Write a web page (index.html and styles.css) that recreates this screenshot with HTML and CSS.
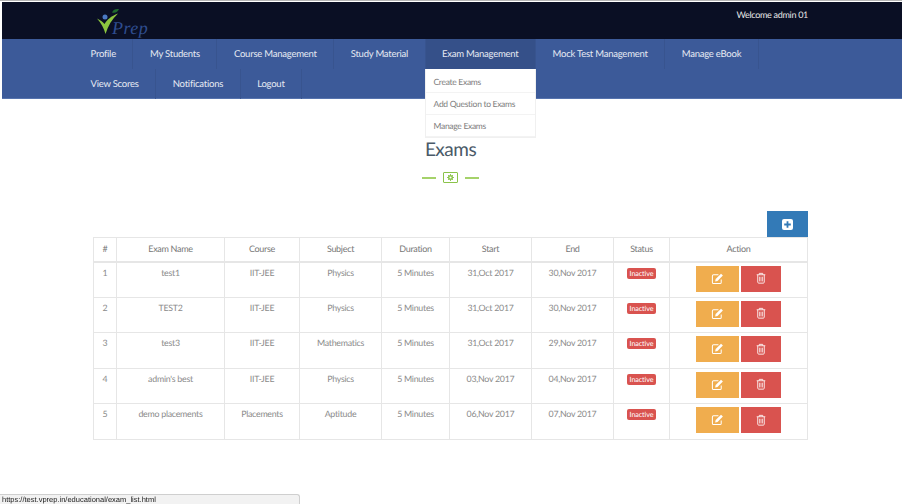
FILE: index.html
```html
<!DOCTYPE html>
<html lang="en">
<head>
    <meta charset="UTF-8">
    <meta name="viewport" content="width=device-width, initial-scale=1.0">
    <title>Exams</title>
    <link rel="stylesheet" href="styles.css">
</head>
<body>
    <svg class="sprites" width="0" height="0">
        <symbol id="icon-edit" viewBox="0 0 14 14">
            <path d="M11 8v3.200a1.300 1.300 0 0 1-1.300 1.300H2.800a1.300 1.300 0 0 1-1.300-1.300V4.300A1.300 1.300 0 0 1 2.800 3H8" fill="none" stroke="currentColor" stroke-width="1.100"/>
            <path d="M5 7.600 10.800 1.800l2 2L7 9.600l-2.500.5z" fill="currentColor"/>
        </symbol>
        <symbol id="icon-trash" viewBox="0 0 14 14">
            <path d="M2 3.200h10M5 3V1.600h4V3" fill="none" stroke="currentColor" stroke-width="1"/>
            <path d="M3.200 3.500v8.300c0 .7.5 1.200 1.100 1.200h5.400c.6 0 1.100-.5 1.100-1.200V3.500" fill="none" stroke="currentColor" stroke-width="1"/>
            <path d="M5.300 5.500v5.500M7 5.500v5.500M8.700 5.500v5.500" fill="none" stroke="currentColor" stroke-width=".8"/>
        </symbol>
    </svg>

    <header class="topbar">
        <a class="logo" href="#">
            <svg class="logo-mark" width="24" height="28" viewBox="0 0 24 28">
                <path d="M0 10.500 C3 12 6 14 7.500 16 C10 12 14 8 21 5.500 C15 11 11 18 8.500 26 C7 20 4 15 0 10.500z" fill="#8cc63f"/>
                <circle cx="8" cy="9" r="2.500" fill="#4a78c2"/>
                <path d="M15 4.500 C16 1.500 19 0.500 22 1 C21 4 18 5.500 15 4.500z" fill="#1f6b2e"/>
            </svg>
            <span class="logo-text">Prep</span>
        </a>
        <div class="welcome">Welcome admin 01</div>
    </header>

    <nav class="mainnav">
        <ul class="menu">
            <li><a href="#">Profile</a></li>
            <li><a href="#">My Students</a></li>
            <li><a href="#">Course Management</a></li>
            <li><a href="#">Study Material</a></li>
            <li class="open">
                <a href="#">Exam Management</a>
                <ul class="dropdown">
                    <li><a href="#">Create Exams</a></li>
                    <li><a href="#">Add Question to Exams</a></li>
                    <li><a href="#">Manage Exams</a></li>
                </ul>
            </li>
            <li><a href="#">Mock Test Management</a></li>
            <li><a href="#">Manage eBook</a></li>
            <li><a href="#">View Scores</a></li>
            <li><a href="#">Notifications</a></li>
            <li><a href="#">Logout</a></li>
        </ul>
    </nav>

    <main class="content">
        <h1>Exams</h1>
        <div class="divider">
            <span class="line"></span>
            <span class="divider-box">
                <svg width="7" height="7" viewBox="0 0 10 10"><circle cx="5" cy="5" r="2.600" fill="none" stroke="#8bc34a" stroke-width="2"/><path d="M5 0v2M5 8v2M0 5h2M8 5h2M1.500 1.500l1.400 1.400M7.100 7.100l1.400 1.400M1.500 8.500l1.400-1.400M7.100 2.900l1.400-1.400" stroke="#8bc34a" stroke-width="1.300"/></svg>
            </span>
            <span class="line"></span>
        </div>

        <div class="toolbar">
            <button class="btn-add" type="button">
                <svg width="11" height="11" viewBox="0 0 11 11"><rect width="11" height="11" rx="2" fill="#fff"/><path d="M5.500 2.200v6.600M2.200 5.500h6.600" stroke="#337ab7" stroke-width="1.800"/></svg>
            </button>
        </div>

        <table class="exams">
            <thead>
                <tr>
                    <th>#</th>
                    <th>Exam Name</th>
                    <th>Course</th>
                    <th>Subject</th>
                    <th>Duration</th>
                    <th>Start</th>
                    <th>End</th>
                    <th>Status</th>
                    <th>Action</th>
                </tr>
            </thead>
            <tbody>
                <tr>
                    <td>1</td><td>test1</td><td>IIT-JEE</td><td>Physics</td><td>5 Minutes</td><td>31,Oct 2017</td><td>30,Nov 2017</td>
                    <td><span class="badge">Inactive</span></td>
                    <td class="actions"><button class="btn edit" type="button"><svg width="13" height="13"><use href="#icon-edit"/></svg></button><button class="btn del" type="button"><svg width="12" height="12"><use href="#icon-trash"/></svg></button></td>
                </tr>
                <tr>
                    <td>2</td><td>TEST2</td><td>IIT-JEE</td><td>Physics</td><td>5 Minutes</td><td>31,Oct 2017</td><td>30,Nov 2017</td>
                    <td><span class="badge">Inactive</span></td>
                    <td class="actions"><button class="btn edit" type="button"><svg width="13" height="13"><use href="#icon-edit"/></svg></button><button class="btn del" type="button"><svg width="12" height="12"><use href="#icon-trash"/></svg></button></td>
                </tr>
                <tr>
                    <td>3</td><td>test3</td><td>IIT-JEE</td><td>Mathematics</td><td>5 Minutes</td><td>31,Oct 2017</td><td>29,Nov 2017</td>
                    <td><span class="badge">Inactive</span></td>
                    <td class="actions"><button class="btn edit" type="button"><svg width="13" height="13"><use href="#icon-edit"/></svg></button><button class="btn del" type="button"><svg width="12" height="12"><use href="#icon-trash"/></svg></button></td>
                </tr>
                <tr>
                    <td>4</td><td>admin's best</td><td>IIT-JEE</td><td>Physics</td><td>5 Minutes</td><td>03,Nov 2017</td><td>04,Nov 2017</td>
                    <td><span class="badge">Inactive</span></td>
                    <td class="actions"><button class="btn edit" type="button"><svg width="13" height="13"><use href="#icon-edit"/></svg></button><button class="btn del" type="button"><svg width="12" height="12"><use href="#icon-trash"/></svg></button></td>
                </tr>
                <tr>
                    <td>5</td><td>demo placements</td><td>Placements</td><td>Aptitude</td><td>5 Minutes</td><td>06,Nov 2017</td><td>07,Nov 2017</td>
                    <td><span class="badge">Inactive</span></td>
                    <td class="actions"><button class="btn edit" type="button"><svg width="13" height="13"><use href="#icon-edit"/></svg></button><button class="btn del" type="button"><svg width="12" height="12"><use href="#icon-trash"/></svg></button></td>
                </tr>
            </tbody>
        </table>
    </main>

    <div class="statusbar">https://test.vprep.in/educational/exam_list.html</div>
</body>
</html>
```

FILE: styles.css
```css
html, body {
    height: 504px;
    overflow: hidden;
}
body {
    font-family: "Lato", "Open Sans", sans-serif;
    font-size: 10px;
    text-rendering: geometricPrecision;
    margin: 0;
    padding: 1px 0 0 2px;
    border-top: 1px solid #b5b5b5;
    box-sizing: border-box;
    background-color: #fff;
    color: #777;
}
a {
    color: inherit;
    text-decoration: none;
}
.sprites {
    display: block;
    height: 0;
}

/* top bar */
.topbar {
    height: 37px;
    background-color: #0a0f24;
    display: flex;
    justify-content: space-between;
    padding: 0 94px 0 95px;
}
.logo {
    display: flex;
    align-items: flex-start;
    padding-top: 6px;
}
.logo-text {
    font-family: "Liberation Serif", serif;
    font-style: italic;
    font-size: 18px;
    line-height: 22px;
    letter-spacing: 0.5px;
    color: #2f4d8f;
    margin: 9px 0 0 -9px;
}
.welcome {
    color: #e8e8e8;
    font-size: 9px;
    letter-spacing: -0.3px;
    line-height: 25px;
}

/* nav */
.mainnav {
    height: 60px;
    background-color: #3c5a99;
    box-sizing: border-box;
    padding-left: 72px;
    border-bottom: 1px solid #5673ad;
}
.menu {
    list-style: none;
    margin: 0;
    padding: 0;
    width: 720px;
    display: flex;
    flex-wrap: wrap;
}
.menu > li {
    position: relative;
    height: 30px;
    border-right: 1px solid #38548f;
}
.menu > li > a {
    display: block;
    height: 30px;
    box-sizing: border-box;
    padding: 1px 16.500px 0;
    font-size: 9.500px;
    letter-spacing: -0.23px;
    line-height: 29px;
    color: #e6eaf3;
}
.menu > li.open > a {
    background-color: #355089;
}
.dropdown {
    list-style: none;
    margin: 0;
    padding: 0;
    position: absolute;
    top: 30px;
    left: -1px;
    width: 109px;
    background-color: #fff;
    border: 1px solid #f0f0f0;
    border-top: none;
    z-index: 5;
}
.dropdown li {
    height: 22px;
    border-bottom: 1px solid #f3f3f3;
    box-sizing: border-box;
}
.dropdown li:first-child {
    height: 24px;
    padding-top: 2px;
}
.dropdown a {
    display: block;
    padding-left: 8px;
    font-size: 8.500px;
    letter-spacing: -0.3px;
    line-height: 22px;
    color: #7d7d7d;
}

/* page title */
.content {
    padding: 0 94px 0 91px;
}
h1 {
    font-size: 19px;
    font-weight: 400;
    letter-spacing: -0.5px;
    line-height: 26px;
    color: #4a5a68;
    text-align: center;
    margin: 38px 0 0;
}
.divider {
    display: flex;
    justify-content: center;
    align-items: center;
    gap: 7px;
    margin-top: 9px;
    height: 11px;
}
.line {
    width: 14px;
    height: 2px;
    background-color: #a5d26a;
}
.divider-box {
    width: 15px;
    height: 11px;
    box-sizing: border-box;
    border: 1px solid #8bc34a;
    border-radius: 1px;
    display: flex;
    justify-content: center;
    align-items: center;
}

/* table */
.toolbar {
    display: flex;
    justify-content: flex-end;
    margin-top: 28px;
}
.btn-add {
    width: 41px;
    height: 26px;
    padding: 0;
    border: none;
    background-color: #337ab7;
    display: flex;
    justify-content: center;
    align-items: center;
}
.exams {
    width: 715px;
    table-layout: fixed;
    border-collapse: collapse;
    color: #8a8a8a;
    font-size: 8.800px;
    letter-spacing: -0.25px;
}
.exams th, .exams td {
    border: 1px solid #e6e6e6;
    text-align: center;
    font-weight: 400;
    padding: 0;
    box-sizing: border-box;
}
.exams th {
    height: 24px;
    font-size: 9px;
    letter-spacing: -0.3px;
    color: #777;
    border-bottom-width: 2px;
    padding-bottom: 2px;
}
.exams td {
    height: 35.600px;
    vertical-align: top;
    padding-top: 4px;
    line-height: 12px;
}
.exams th:nth-child(1) { width: 23px; }
.exams th:nth-child(2) { width: 108px; }
.exams th:nth-child(3) { width: 75px; }
.exams th:nth-child(4) { width: 82px; }
.exams th:nth-child(5) { width: 68px; }
.exams th:nth-child(6) { width: 82px; }
.exams th:nth-child(7) { width: 82px; }
.exams th:nth-child(8) { width: 56px; }
.badge {
    display: inline-block;
    background-color: #d9534f;
    color: #fff;
    font-size: 7.200px;
    letter-spacing: -0.1px;
    line-height: 11px;
    padding: 0 3px;
    border-radius: 2px;
}
.exams td.actions {
    padding-top: 3px;
    padding-right: 1px;
    font-size: 0;
}
.btn {
    height: 26px;
    border: none;
    padding: 0;
    color: #fff;
    vertical-align: top;
}
.btn svg {
    margin-top: 2px;
}
.edit {
    width: 43px;
    background-color: #f0ad4e;
    margin-right: 2px;
}
.del {
    width: 40px;
    background-color: #d9534f;
}

/* browser link preview */
.statusbar {
    position: fixed;
    left: 0;
    bottom: 0;
    width: 300px;
    height: 10px;
    box-sizing: border-box;
    background-color: #f2f2f2;
    border-top: 1px solid #cfcfcf;
    border-right: 1px solid #cfcfcf;
    border-radius: 0 3px 0 0;
    padding-left: 2px;
    font-family: "Liberation Sans", sans-serif;
    font-size: 7.500px;
    line-height: 9px;
    color: #222;
}
```
